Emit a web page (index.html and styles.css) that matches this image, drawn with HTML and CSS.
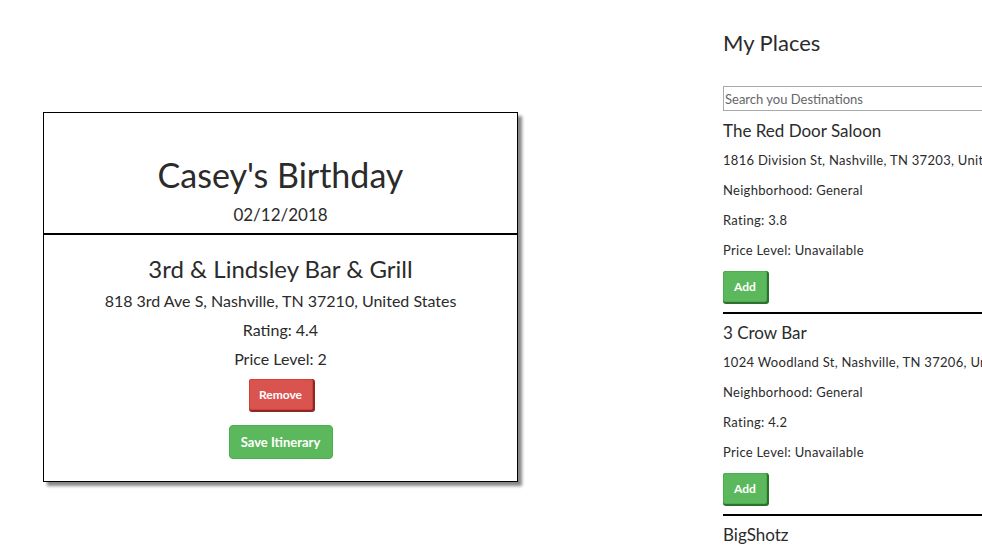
FILE: index.html
```html
<!DOCTYPE html>
<html>
<head>
<meta charset="utf-8">
<link rel="stylesheet" href="styles.css">
</head>
<body>
<div class="page">
  <main class="left">
    <section class="card">
      <header class="card-head">
        <h1 class="title">Casey's Birthday</h1>
        <div class="date">02/12/2018</div>
      </header>
      <div class="card-body">
        <h2 class="venue">3rd &amp; Lindsley Bar &amp; Grill</h2>
        <p class="line">818 3rd Ave S, Nashville, TN 37210, United States</p>
        <p class="line">Rating: 4.4</p>
        <p class="line">Price Level: 2</p>
        <button class="btn btn-remove">Remove</button>
        <button class="btn btn-save">Save Itinerary</button>
      </div>
    </section>
  </main>
  <aside class="right">
    <h2 class="places-title">My Places</h2>
    <input class="search" type="text" placeholder="Search you Destinations">
    <div class="place">
      <h3 class="place-name">The Red Door Saloon</h3>
      <p class="place-line">1816 Division St, Nashville, TN 37203, United States</p>
      <p class="place-line">Neighborhood: General</p>
      <p class="place-line">Rating: 3.8</p>
      <p class="place-line">Price Level: Unavailable</p>
      <button class="btn btn-add">Add</button>
    </div>
    <div class="place">
      <h3 class="place-name">3 Crow Bar</h3>
      <p class="place-line">1024 Woodland St, Nashville, TN 37206, United States</p>
      <p class="place-line">Neighborhood: General</p>
      <p class="place-line">Rating: 4.2</p>
      <p class="place-line">Price Level: Unavailable</p>
      <button class="btn btn-add">Add</button>
    </div>
    <div class="place">
      <h3 class="place-name">BigShotz</h3>
      <p class="place-line">Nashville, TN, United States</p>
    </div>
  </aside>
</div>
</body>
</html>
```
FILE: styles.css
```css
html, body {
  margin: 0;
  padding: 0;
  overflow: hidden;
  background: #fff;
}
body {
  font-family: "Lato", "Open Sans", sans-serif;
  color: #2b2b2b;
  width: 982px;
  height: 549px;
}
.page {
  display: flex;
  align-items: flex-start;
}
.left {
  width: 723px;
  flex: none;
  padding: 112px 0 0 43px;
  box-sizing: border-box;
}
.card {
  width: 475px;
  box-sizing: border-box;
  border: 1px solid #000;
  box-shadow: 4px 4px 3px #888;
  text-align: center;
}
.card-head {
  height: 122px;
  box-sizing: border-box;
  padding-top: 40px;
  border-bottom: 2px solid #000;
}
.title {
  margin: 0;
  font-weight: 400;
  font-size: 34px;
  line-height: 44px;
}
.date {
  font-size: 17px;
  line-height: 22px;
  margin-top: 7px;
}
.card-body {
  padding: 19px 0 22px;
  display: flex;
  flex-direction: column;
  align-items: center;
}
.venue {
  margin: 0 0 6px;
  font-weight: 400;
  font-size: 24px;
  line-height: 30px;
}
.line {
  margin: 0 0 7px;
  font-size: 16px;
  line-height: 22px;
}
.btn {
  font-family: inherit;
  color: #fff;
  font-weight: 700;
  font-size: 12px;
  cursor: pointer;
}
.btn-remove {
  margin-top: 2px;
  width: 64px;
  height: 31px;
  background: #d9534f;
  border: 1px solid #d43f3a;
  border-radius: 2px;
  box-shadow: 1px 1px 0 1px #8a2a27;
}
.btn-save {
  margin-top: 15px;
  width: 104px;
  height: 34px;
  background: #5cb85c;
  border: 1px solid #4cae4c;
  border-radius: 4px;
  font-size: 13px;
}
.right {
  flex: none;
  width: 320px;
  padding-top: 28px;
}
.places-title {
  margin: 0;
  font-weight: 400;
  font-size: 22px;
  line-height: 30px;
}
.search {
  display: block;
  margin-top: 28px;
  width: 300px;
  height: 25px;
  box-sizing: border-box;
  border: 1px solid #a9a9a9;
  padding: 0 1px;
  font-family: inherit;
  font-size: 13px;
  color: #555;
}
.search::placeholder {
  color: #666;
}
.place {
  padding-top: 8px;
}
.place + .place {
  border-top: 2px solid #000;
  margin-top: 10px;
  padding-top: 7px;
}
.place-name {
  margin: 0;
  font-weight: 400;
  font-size: 17px;
  line-height: 24px;
}
.place-line {
  margin: 0;
  font-size: 13px;
  line-height: 30px;
  white-space: nowrap;
  letter-spacing: 0.3px;
}
.place-name + .place-line {
  margin-top: 2px;
}
.btn-add {
  margin-top: 6px;
  width: 44px;
  height: 31px;
  background: #5cb85c;
  border: 1px solid #4cae4c;
  border-radius: 2px;
  box-shadow: 1px 1px 0 1px #2f6f2f;
  font-size: 12px;
}
```
